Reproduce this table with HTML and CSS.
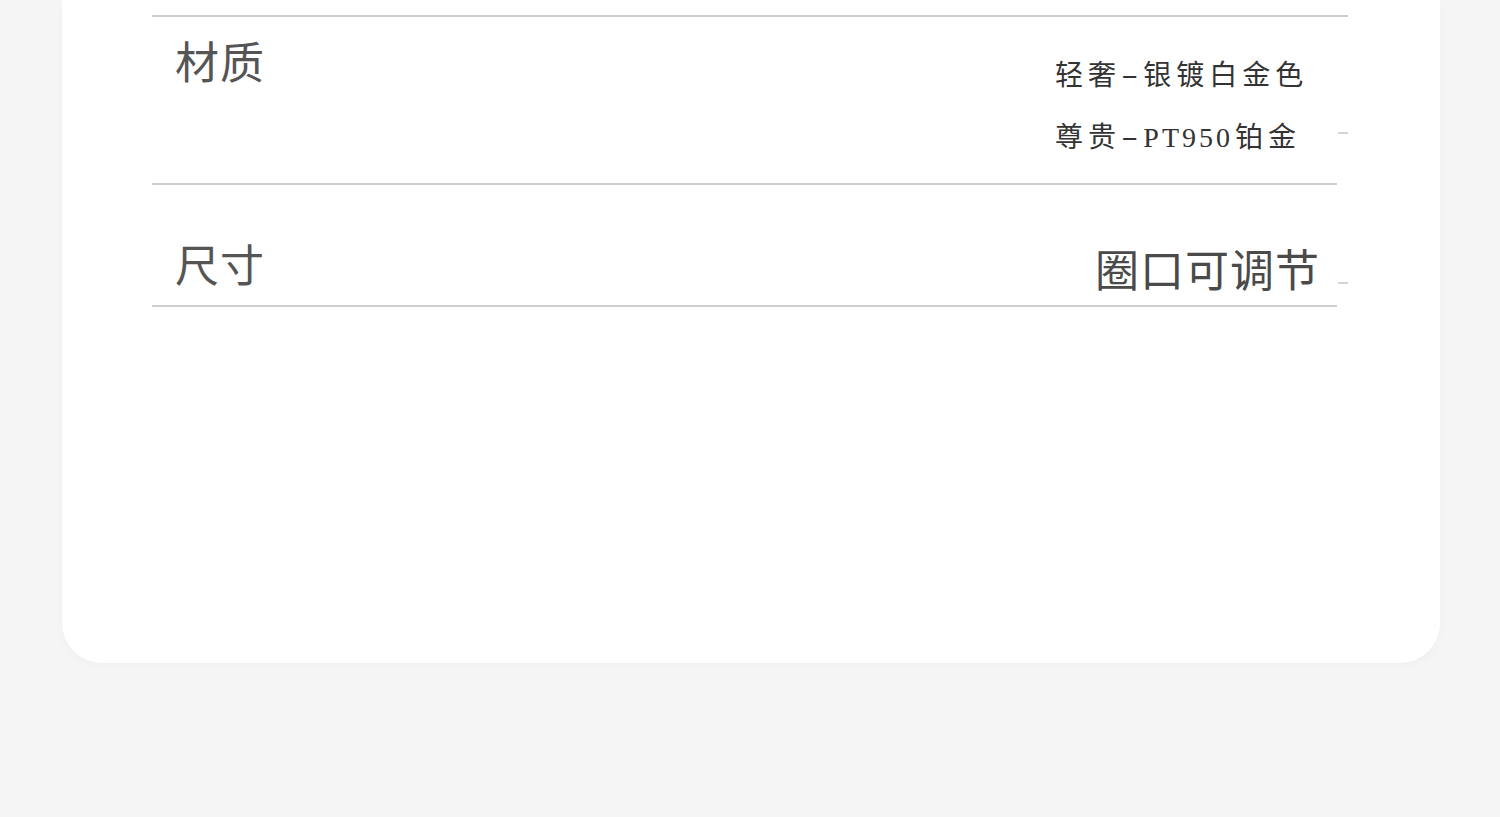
FILE: index.html
```html
<!DOCTYPE html>
<html lang="zh-CN">
<head>
  <meta charset="UTF-8">
  <meta name="viewport" content="width=device-width, initial-scale=1.0">
  <title>商品参数</title>
  <link rel="stylesheet" href="styles.css">
</head>
<body>
  <div class="card">
    <div class="divider divider-top"></div>

    <!-- 材质 -->
    <div class="spec-row material">
      <div class="spec-label">材质</div>
      <div class="spec-values">
        <div class="option">轻奢<span class="dash">-</span>银镀白金色</div>
        <div class="option">尊贵<span class="dash">-</span><span class="latin">PT950</span>铂金</div>
      </div>
      <div class="mark mark-material"></div>
    </div>
    <div class="divider"></div>

    <!-- 尺寸 -->
    <div class="spec-row size">
      <div class="spec-label">尺寸</div>
      <div class="spec-values size-value">圈口可调节</div>
      <div class="mark mark-size"></div>
    </div>
    <div class="divider"></div>
  </div>
</body>
</html>
```

FILE: styles.css
```css
/* Page */
body {
  margin: 0;
  background-color: #f5f5f5;
  font-family: "Noto Sans CJK SC", "Noto Sans", sans-serif;
  height: 817px;
  overflow: hidden;
}

.card {
  background-color: #fff;
  margin-left: 62px;
  width: 1378px;
  height: 663px;
  border-radius: 0 0 40px 40px;
  box-shadow: 0 3px 10px rgba(0, 0, 0, 0.025);
  padding-top: 15px;
  padding-left: 90px;
  box-sizing: border-box;
}

.divider {
  width: 1185px;
  height: 2px;
  background-color: #cdcdcd;
}

.divider-top {
  width: 1196px;
}

/* Rows */
.spec-row {
  display: flex;
  align-items: flex-start;
  width: 1196px;
}

.spec-row.material {
  height: 166px;
}

.spec-row.size {
  height: 120px;
}

.spec-label {
  flex: 1;
  padding-left: 23px;
  font-size: 44px;
  line-height: 1;
  color: #555;
  letter-spacing: 1px;
}

.material .spec-label {
  padding-top: 21px;
}

.size .spec-label {
  padding-top: 56px;
}

.spec-values {
  width: 265px;
  margin-right: 18px;
}

.option {
  font-family: "Liberation Serif", "Noto Sans CJK SC", serif;
  font-size: 28px;
  line-height: 62px;
  letter-spacing: 5px;
  color: #333;
  white-space: nowrap;
}

.option .dash {
  display: inline-block;
  letter-spacing: 0;
  margin: 0 9px 0 4px;
  transform: translateY(-2px) scaleX(1.8);
}

.option .latin {
  letter-spacing: 3px;
  margin-right: 2px;
}

.material .spec-values {
  padding-top: 28px;
}

.size-value {
  padding-top: 61px;
  font-size: 44px;
  line-height: 1;
  color: #4a4a4a;
  text-align: right;
  letter-spacing: 1px;
}

/* little grey dash at the right edge */
.mark {
  width: 10px;
  height: 2px;
  background-color: #d4d4d4;
}

.mark-material {
  margin-top: 115px;
}

.mark-size {
  margin-top: 97px;
}
```
